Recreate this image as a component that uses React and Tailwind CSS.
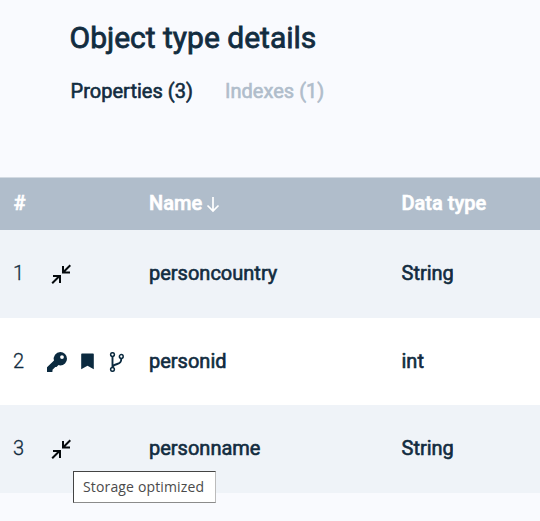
const ROWS = [
  { n: 1, name: 'personcountry', type: 'String', height: 'h-[88px]', bg: 'bg-[#eff3f8]', optimized: true },
  { n: 2, name: 'personid', type: 'int', height: 'h-[87px]', bg: 'bg-white', optimized: false },
  { n: 3, name: 'personname', type: 'String', height: 'h-[88px]', bg: 'bg-[#eff3f8]', optimized: true },
];

function CompressIcon() {
  return (
    <svg width="20" height="20" viewBox="0 0 20 20" fill="none" stroke="#050a0d" strokeWidth="2" className="ml-1">
      <path d="M19.300 1.200 12.500 8M12 2V8.500H19" />
      <path d="M1.200 19.300 8 12.500M2 12H9V19" />
    </svg>
  );
}

function KeyIcon() {
  return (
    <svg width="20" height="20" viewBox="0 0 20 20" fill="#0b2a3f" fillRule="evenodd">
      <path d="M13.300 0A6.700 6.700 0 0 1 13.300 13.400Q12.300 13.400 11.500 13.100L9.500 15H8.300L5.500 17.800V19.500Q5.200 20 4.500 20H0V15.300L7 8.600A6.700 6.700 0 0 1 13.300 0ZM15 3.200A1.900 1.900 0 1 0 15 7 1.900 1.900 0 1 0 15 3.200Z" />
    </svg>
  );
}

function BookmarkIcon() {
  return (
    <svg width="13" height="17" viewBox="0 0 13 17" fill="#0b2a3f" className="ml-[13.500px]">
      <path d="M1 .5H12Q12.800.5 12.800 1.300V16.200L6.500 12.700.2 16.200V1.300Q.2.5 1 .5Z" />
    </svg>
  );
}

function BranchIcon() {
  return (
    <svg width="16" height="20" viewBox="0 0 16 20" fill="none" stroke="#0b2a3f" strokeWidth="1.500" className="ml-[15.500px]">
      <circle cx="3.500" cy="2.600" r="1.900" />
      <circle cx="12.300" cy="4.500" r="1.900" />
      <circle cx="3.500" cy="17.400" r="1.900" />
      <path strokeWidth="1.900" d="M3.500 4.500V15.500M12.300 6.400C12.300 10.500 10.800 11.300 8.200 12 5.800 12.600 4 13.200 3.600 15" />
    </svg>
  );
}

export default function App() {
  return (
    <div className="relative h-[521px] w-[540px] overflow-hidden bg-[#f9fafe] font-[Roboto,sans-serif] text-[#122c40]">
      <header className="h-[177px] pl-[69px] pt-[18px]">
        <h1 className="pl-[0.500px] text-[30px] font-normal leading-10 [-webkit-text-stroke:0.8px]">Object type details</h1>
        <nav className="mt-[18px] flex gap-8 pl-[1.500px] text-xl font-normal leading-[30px] tracking-[0.03px] [-webkit-text-stroke:0.6px]">
          <span>Properties (3)</span>
          <span className="text-[#b0bdcb]">Indexes (1)</span>
        </nav>
      </header>
      <main>
        <div className="flex h-[53px] items-center border-t border-[#d3dae2] bg-[#b0bdcb] pb-0.5 pl-[13.500px] text-xl font-medium text-white">
          <span className="w-[135.500px] [-webkit-text-stroke:0.6px]">#</span>
          <span className="flex w-[252.500px] items-center">
            <span className="[-webkit-text-stroke:0.6px]">Name</span>
            <svg width="14" height="17" viewBox="0 0 14 17" fill="none" stroke="currentColor" strokeWidth="1.700" className="ml-[3.500px] mt-0.5">
              <path d="M7 1V15M1.500 9.500 7 15 12.500 9.500" />
            </svg>
          </span>
          <span className="[-webkit-text-stroke:0.6px]">Data type</span>
        </div>
        {ROWS.map((row) => (
          <div key={row.n} className={`flex items-center pl-[13px] text-xl font-normal ${row.height} ${row.bg}`}>
            <span className="w-[34px] pb-0.5 font-light [-webkit-text-stroke:0.3px]">{row.n}</span>
            <span className="flex w-[102px] items-center">
              {row.optimized ? <CompressIcon /> : <><KeyIcon /><BookmarkIcon /><BranchIcon /></>}
            </span>
            <span className="w-[252.500px] pb-0.5 [-webkit-text-stroke:0.6px]">{row.name}</span>
            <span className="pb-0.5 [-webkit-text-stroke:0.6px]">{row.type}</span>
          </div>
        ))}
      </main>
      <div className="absolute left-[73px] top-[471px] flex h-8 w-[143px] items-center border border-b-[#8b8b8b] border-l-[#444] border-r-[#bbb] border-t-[#444] bg-white pb-0.5 pl-[9px] font-['Open_Sans',sans-serif] text-[14px] tracking-[0.15px] text-[#4b4b4b]">
        Storage optimized
      </div>
    </div>
  );
}
